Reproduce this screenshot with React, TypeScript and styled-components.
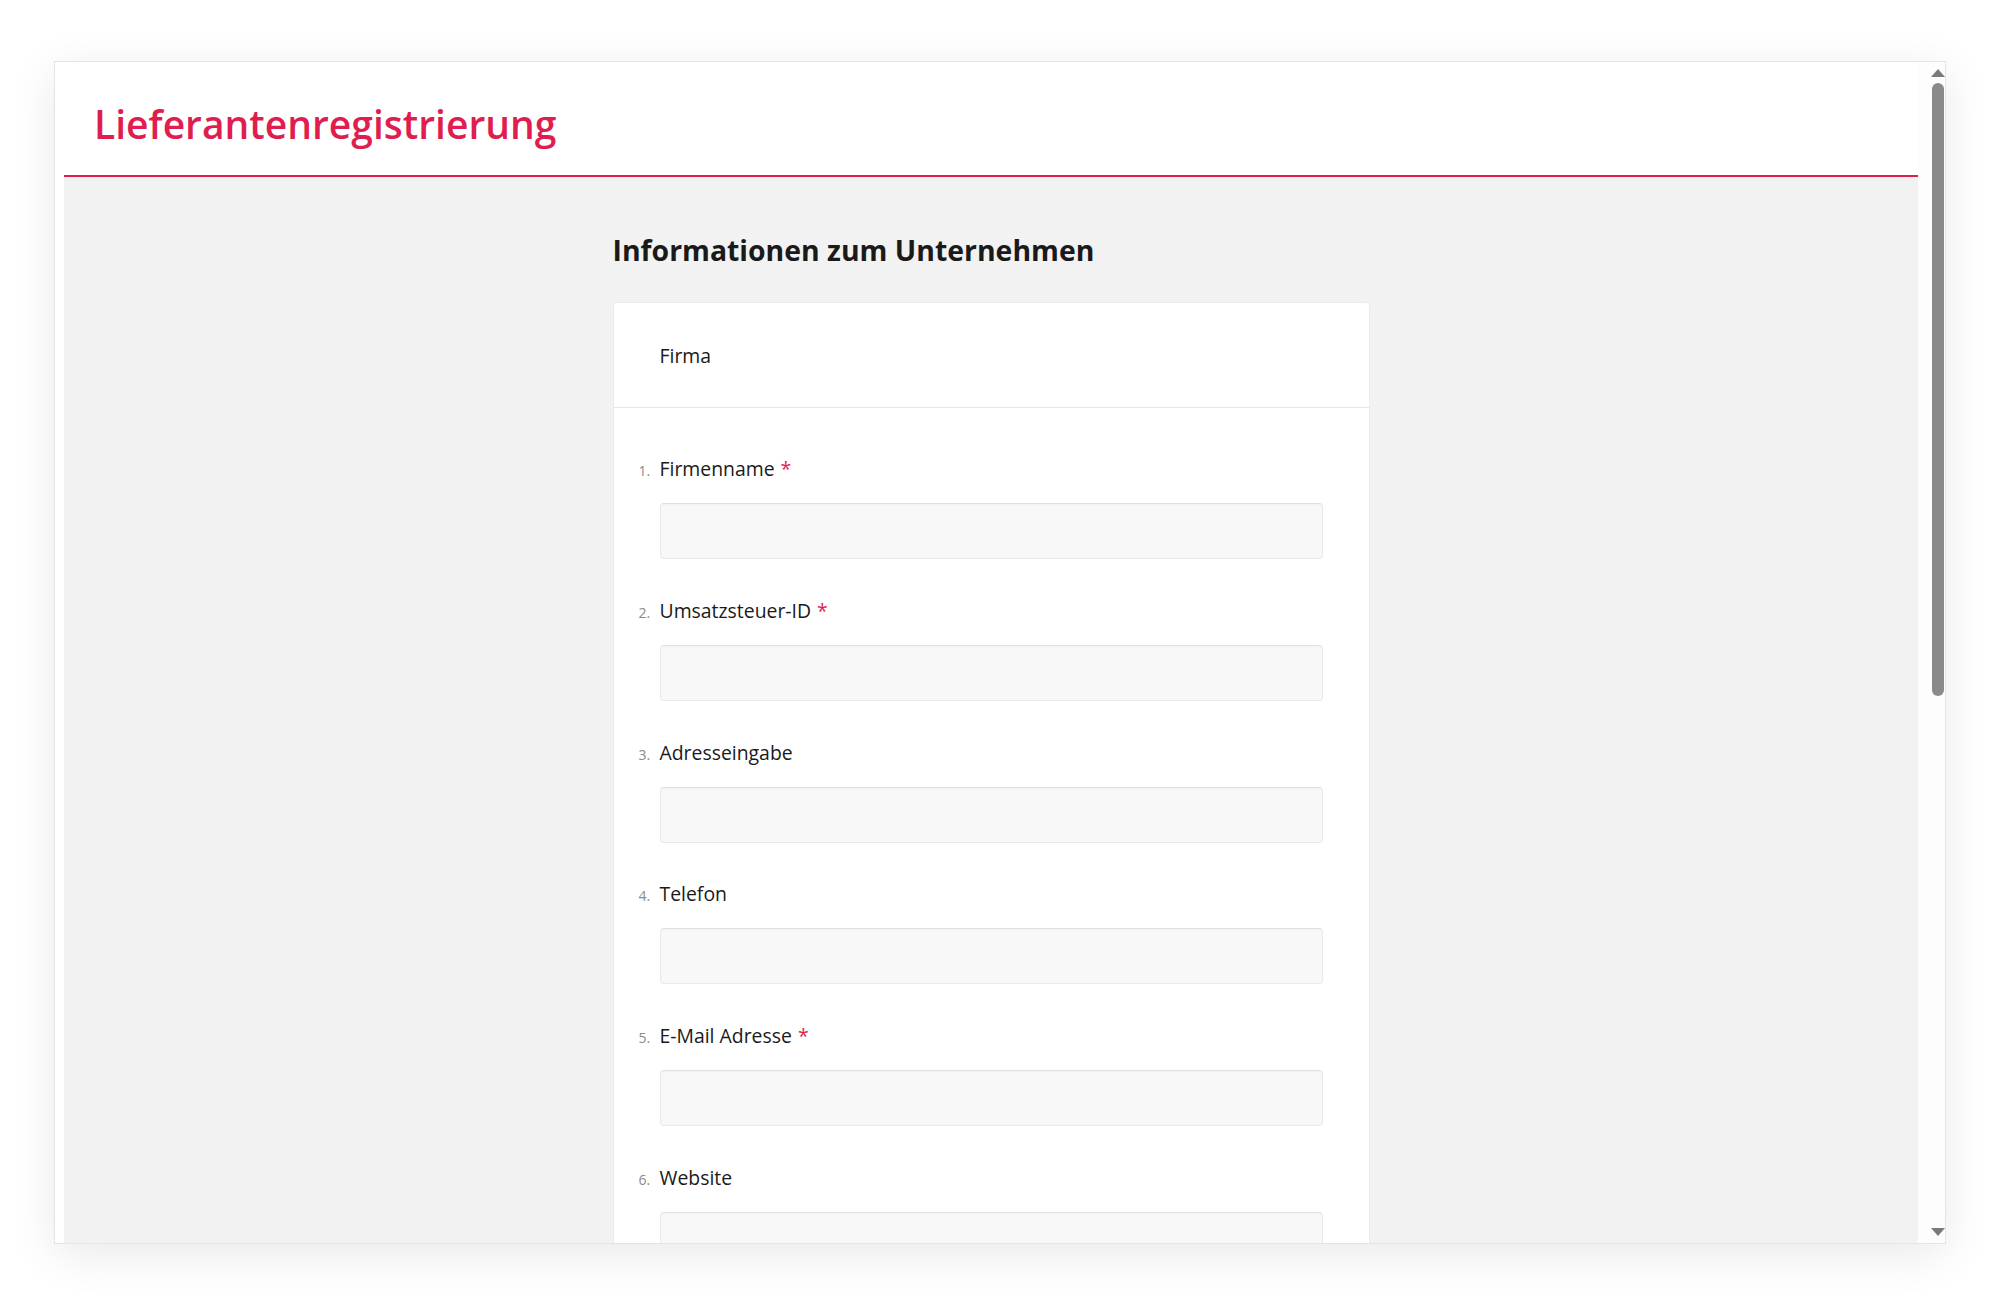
import React from 'react';
import styled, { createGlobalStyle } from 'styled-components';

const COLORS = {
  brand: '#e01d4f',
  text: '#1a1a1a',
  muted: '#8a8a8a',
  pageBg: '#f2f2f2',
  border: '#e6e6e6',
  inputBg: '#f8f8f8',
  scroll: '#8a8a8a',
};

const FONT = `'Open Sans', 'Liberation Sans', sans-serif`;

type Question = {
  label: string;
  required?: boolean;
};

const QUESTIONS: Question[] = [
  { label: 'Firmenname', required: true },
  { label: 'Umsatzsteuer-ID', required: true },
  { label: 'Adresseingabe' },
  { label: 'Telefon' },
  { label: 'E-Mail Adresse', required: true },
  { label: 'Website' },
];

const GlobalStyle = createGlobalStyle`
  html, body {
    margin: 0;
    padding: 0;
    background: #ffffff;
    font-family: ${FONT};
  }
  * {
    box-sizing: border-box;
  }
`;

const App = () => {
  return (
    <>
      <GlobalStyle />
      <Page>
        <Frame>
          <Viewport>
            <Header>
              <Title>Lieferantenregistrierung</Title>
            </Header>

            <Body>
              <Column>
                <SectionTitle>Informationen zum Unternehmen</SectionTitle>

                <Card>
                  <CardHeader>Firma</CardHeader>
                  <CardBody>
                    {QUESTIONS.map((q, i) => (
                      <QuestionRow key={q.label}>
                        <Number>{i + 1}.</Number>
                        <Label>
                          {q.label}
                          {q.required && <Required>*</Required>}
                        </Label>
                        <Input type="text" aria-label={q.label} />
                      </QuestionRow>
                    ))}
                  </CardBody>
                </Card>
              </Column>
            </Body>
          </Viewport>

          <ScrollTrack>
            <ArrowUp />
            <Thumb />
            <ArrowDown />
          </ScrollTrack>
        </Frame>
      </Page>
    </>
  );
};

const Page = styled.div`
  width: 2000px;
  height: 1308px;
  padding: 61px 54px 0 54px;
  overflow: hidden;
  background: #ffffff;
`;

const Frame = styled.div`
  display: flex;
  width: 1892px;
  height: 1183px;
  background: #ffffff;
  border: 1px solid #e4e4e4;
  box-shadow: 0 10px 44px rgba(0, 0, 0, 0.09);
  padding-left: 9px;
`;

const Viewport = styled.div`
  flex: 1;
  display: flex;
  flex-direction: column;
  overflow: hidden;
`;

const Header = styled.header`
  flex-shrink: 0;
  height: 115px;
  padding: 38px 0 0 30px;
  background: #ffffff;
  border-bottom: 2px solid ${COLORS.brand};
`;

const Title = styled.h1`
  margin: 0;
  font-family: ${FONT};
  font-size: 39px;
  line-height: 48px;
  font-weight: 600;
  color: ${COLORS.brand};
`;

const Body = styled.main`
  flex: 1 0 auto;
  background: ${COLORS.pageBg};
  padding-top: 56px;
  display: flex;
  justify-content: center;
`;

const Column = styled.div`
  width: 757px;
  display: flex;
  flex-direction: column;
`;

const SectionTitle = styled.h2`
  margin: 0 0 35px 0;
  font-family: ${FONT};
  font-size: 28.4px;
  line-height: 34px;
  font-weight: 700;
  color: ${COLORS.text};
`;

const Card = styled.section`
  background: #ffffff;
  border: 1px solid #ebebeb;
  border-radius: 4px;
`;

const CardHeader = styled.div`
  height: 105px;
  display: flex;
  align-items: center;
  padding-left: 46px;
  border-bottom: 1px solid ${COLORS.border};
  font-size: 19.4px;
  font-weight: 500;
  color: ${COLORS.text};
`;

const CardBody = styled.div`
  display: flex;
  flex-direction: column;
  gap: 38.8px;
  padding: 48px 46px 40px 25px;
`;

const QuestionRow = styled.div`
  display: grid;
  grid-template-columns: 21px 1fr;
  grid-template-rows: 26px 56px;
  row-gap: 21px;
  align-items: baseline;
`;

const Number = styled.span`
  font-size: 14px;
  color: ${COLORS.muted};
`;

const Label = styled.label`
  font-size: 19.4px;
  line-height: 26px;
  font-weight: 500;
  color: ${COLORS.text};
`;

const Required = styled.span`
  margin-left: 6px;
  color: ${COLORS.brand};
`;

const Input = styled.input`
  grid-column: 2;
  align-self: stretch;
  width: 100%;
  height: 56px;
  background: ${COLORS.inputBg};
  border: 1px solid #e9e9e9;
  border-top-color: #e0e0e0;
  border-radius: 4px;
  box-shadow: inset 0 1px 2px rgba(0, 0, 0, 0.03);
  outline: none;
  font-family: ${FONT};
`;

const ScrollTrack = styled.div`
  width: 27px;
  display: flex;
  flex-direction: column;
  align-items: flex-start;
  padding-left: 13px;
  background: #fdfdfd;
`;

const ArrowUp = styled.div`
  margin-top: 7px;
  width: 0;
  height: 0;
  border-left: 7px solid transparent;
  border-right: 7px solid transparent;
  border-bottom: 8px solid #7a7a7a;
`;

const Thumb = styled.div`
  margin: 6px 0 0 1px;
  width: 12px;
  height: 613px;
  border-radius: 6px;
  background: ${COLORS.scroll};
`;

const ArrowDown = styled.div`
  margin-top: auto;
  margin-bottom: 7px;
  width: 0;
  height: 0;
  border-left: 7px solid transparent;
  border-right: 7px solid transparent;
  border-top: 8px solid #7a7a7a;
`;

export default App;
